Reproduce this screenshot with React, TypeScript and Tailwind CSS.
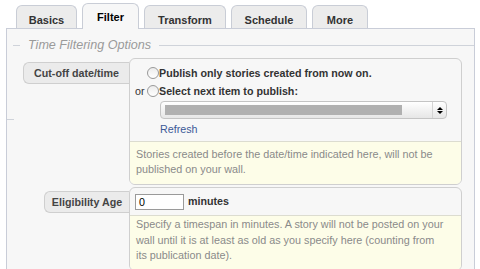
import React from 'react';

const tabs = [
  { name: 'Basics', w: 'w-[61px]' },
  { name: 'Filter', w: 'w-[57px]', active: true },
  { name: 'Transform', w: 'w-[82px]' },
  { name: 'Schedule', w: 'w-[76px]' },
  { name: 'More', w: 'w-[56px]' },
];

function Radio() {
  return (
    <span className="inline-block w-[12px] h-[12px] rounded-full border border-[#999] bg-gradient-to-b from-[#ececec] to-white shrink-0" />
  );
}

function FieldLabel({ text, w }: { text: string; w: string }) {
  return (
    <div
      className={`${w} h-[22px] flex items-center justify-center rounded-l-[6px] border border-r-0 border-[#cfcfcf] bg-[#ebebeb] text-[10.7px] font-bold text-[#444]`}
    >
      {text}
    </div>
  );
}

export default function App() {
  return (
    <div className="w-[480px] h-[269px] overflow-hidden bg-white flex flex-col font-['Liberation_Sans',Arial,sans-serif]">
      {/* Tabs */}
      <div className="h-[28px] pl-[16px] flex items-end gap-[5px] shrink-0">
        {tabs.map((t) =>
          t.active ? (
            <div
              key={t.name}
              className={`${t.w} h-[26px] -mb-px z-10 rounded-t-[6px] border border-b-0 border-[#c9cdd6] bg-[#f7f7f7] flex justify-center pt-[5px] text-[11px] font-bold text-black`}
            >
              {t.name}
            </div>
          ) : (
            <div
              key={t.name}
              className={`${t.w} h-[23px] rounded-t-[6px] border border-b-0 border-[#c9cdd6] bg-[#ececec] flex justify-center pt-[6px] text-[11px] font-bold text-[#333]`}
            >
              {t.name}
            </div>
          )
        )}
      </div>

      {/* Panel */}
      <div className="relative ml-[6px] w-[469px] flex-1 border border-[#c9cdd8] bg-[#f7f7f7]">
        {/* Legend */}
        <div className="mt-[9px] flex items-center">
          <div className="ml-[6px] w-[7px] h-px bg-[#cfd3da]" />
          <div className="px-[8px] text-[12.6px] italic text-[#9a9a9a] leading-[14px]">Time Filtering Options</div>
          <div className="flex-1 h-px bg-[#cfd3da]" />
        </div>

        <div className="absolute left-0 top-[90px] w-[7px] h-px bg-[#cfd3da]" />

        {/* Cut-off */}
        <div className="mt-[6px] flex items-start">
          <div className="w-[122px] flex justify-end pt-[4px]">
            <FieldLabel text="Cut-off date/time" w="w-[106px]" />
          </div>
          <div className="w-[333px] rounded-[6px] border border-[#cfcfcf] overflow-hidden">
            <div className="h-[82px] pl-[5px] pt-[7px] text-[10.7px] font-bold text-[#333]">
              <div className="flex items-center h-[14px]">
                <span className="w-[12px]" />
                <Radio />
                <span>Publish only stories created from now on.</span>
              </div>
              <div className="mt-[4px] flex items-center h-[14px]">
                <span className="w-[12px] font-normal">or</span>
                <Radio />
                <span>Select next item to publish:</span>
              </div>
              <div className="mt-[3px] ml-[25px] w-[287px] h-[18px] rounded-[4px] border border-[#c4c4c4] bg-gradient-to-b from-white to-[#e6e6e6] flex items-center">
                <div className="ml-[4px] w-[237px] h-[10px] bg-[#b0b0b0]" />
                <div className="ml-auto w-[14px] h-full border-l border-[#d4d4d4] flex flex-col items-center justify-center gap-[1px]">
                  <span className="w-0 h-0 border-x-[3px] border-x-transparent border-b-[3px] border-b-black" />
                  <span className="w-0 h-0 border-x-[3px] border-x-transparent border-t-[3px] border-t-black" />
                </div>
              </div>
              <div className="mt-[4px] ml-[25px] leading-[12px] font-normal text-[#3b5998]">Refresh</div>
            </div>
            <div className="border-t border-[#dcdcd0] bg-[#fdfde8] px-[6px] pt-[5px] pb-[7px] text-[10.8px] leading-[15px] text-[#8a8a8a]">
              Stories created before the date/time indicated here, will not be
              <br />
              published on your wall.
            </div>
          </div>
        </div>

        {/* Eligibility */}
        <div className="mt-[2px] flex items-start">
          <div className="w-[122px] flex justify-end pt-[4px]">
            <FieldLabel text="Eligibility Age" w="w-[85px]" />
          </div>
          <div className="w-[333px] rounded-[6px] border border-[#cfcfcf] overflow-hidden">
            <div className="h-[27px] pl-[5px] flex items-center gap-[4px] text-[10.7px] font-bold text-[#333]">
              <div className="w-[49px] h-[16px] border border-[#9a9a9a] bg-white pl-[3px] text-[10.7px] font-normal text-black leading-[14px]">0</div>
              <span>minutes</span>
            </div>
            <div className="border-t border-[#dcdcd0] bg-[#fdfde8] px-[6px] pt-[1px] pb-[6px] text-[10.8px] leading-[15.5px] text-[#8a8a8a]">
              Specify a timespan in minutes. A story will not be posted on your
              <br />
              wall until it is at least as old as you specify here (counting from
              <br />
              its publication date).
            </div>
          </div>
        </div>
      </div>
    </div>
  );
}
